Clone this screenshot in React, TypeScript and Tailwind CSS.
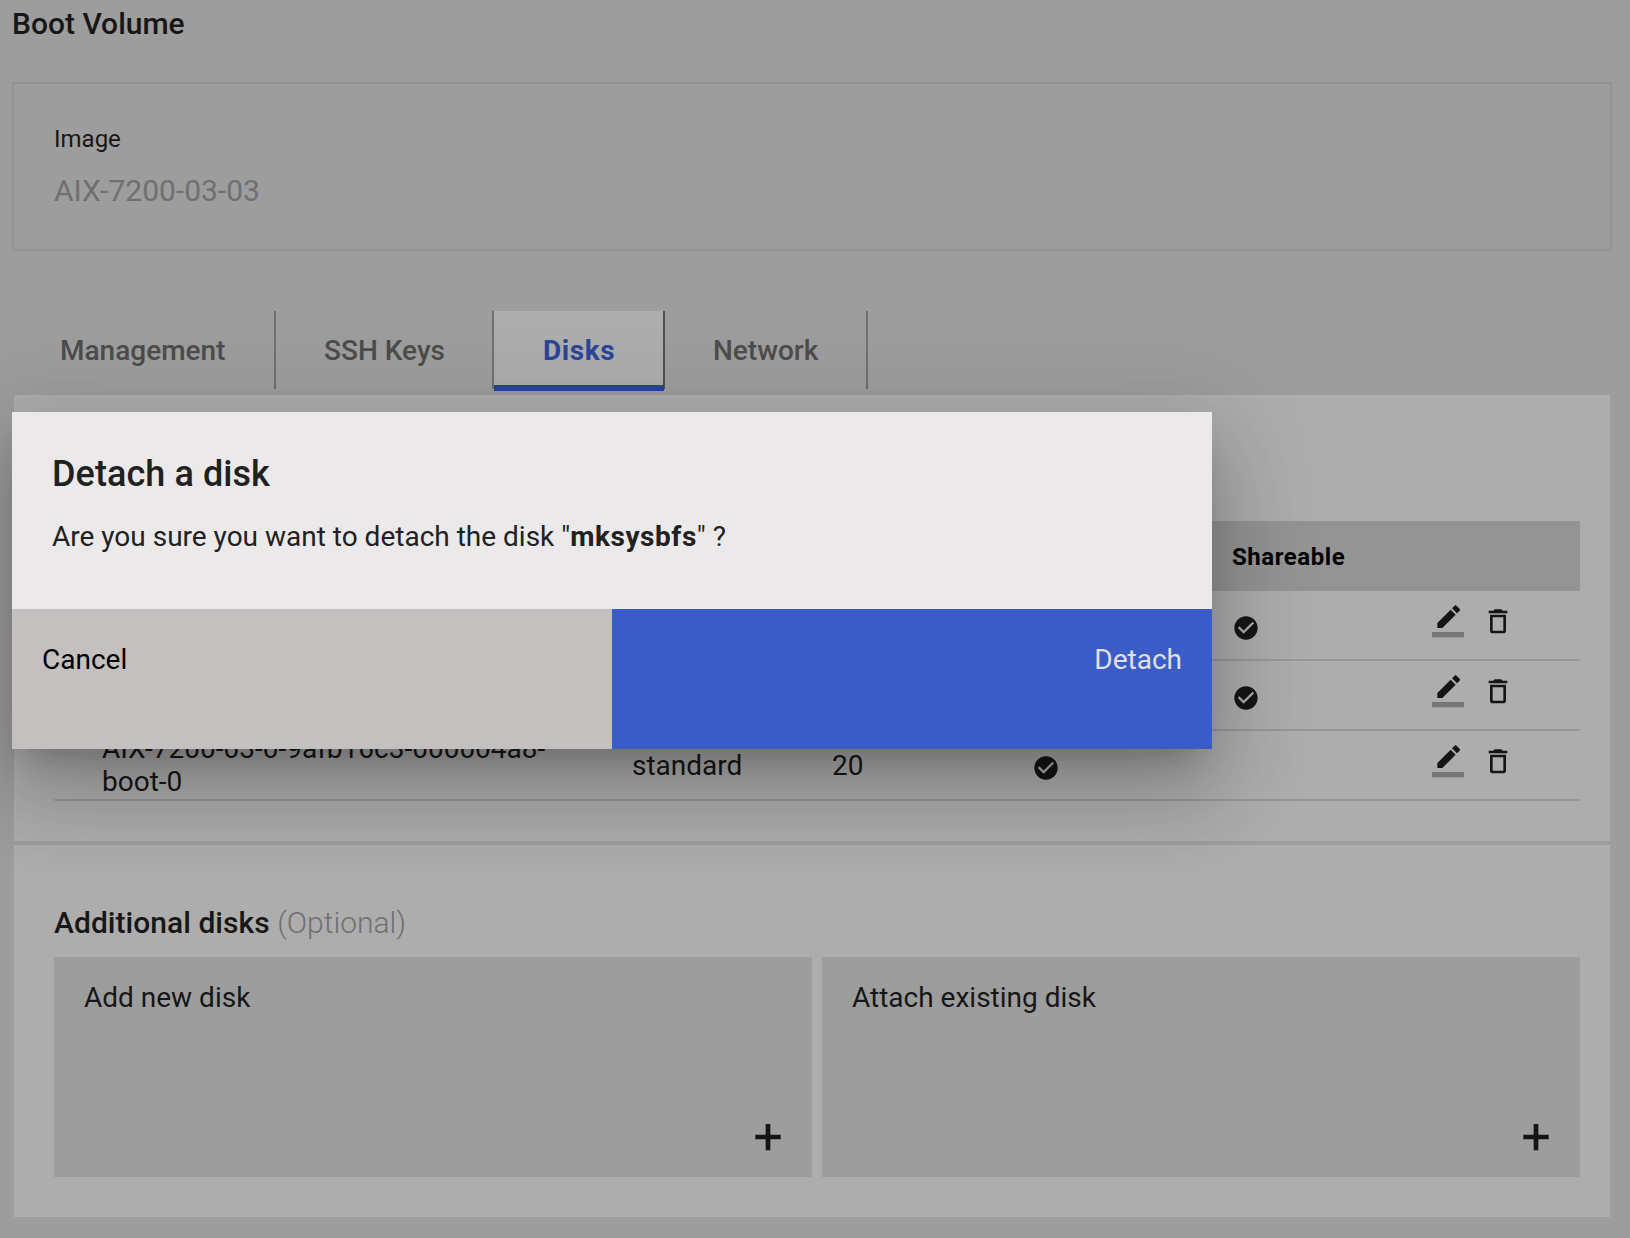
import React from "react";

type Disk = { name: string; type: string; size: string; bootable: boolean; shareable: boolean };

const disks: Disk[] = [
  { name: "", type: "", size: "", bootable: false, shareable: true },
  { name: "", type: "", size: "", bootable: false, shareable: true },
  { name: "AIX-7200-03-0-9afb16c3-000004a8-boot-0", type: "standard", size: "20", bootable: true, shareable: false },
];

function CheckIcon() {
  return (
    <svg viewBox="0 0 24 24" className="mt-1.5 h-7 w-7 fill-[#151515]">
      <path d="M12 2C6.48 2 2 6.48 2 12s4.48 10 10 10 10-4.48 10-10S17.52 2 12 2zm-2 15l-5-5 1.41-1.41L10 14.17l7.59-7.59L19 8l-9 9z" />
    </svg>
  );
}

function EditIcon() {
  return (
    <svg viewBox="0 -0.25 24 24" className="h-8 w-8 overflow-visible fill-[#151515]">
      <path d="M17.75 7L14 3.25l-10 10V17h3.75l10-10zm2.96-2.96c.39-.39.39-1.02 0-1.41L18.37.29c-.39-.39-1.02-.39-1.41 0L15 2.25 18.75 6l1.96-1.96z" />
      <path fillOpacity=".36" d="M0 20h24v4H0z" />
    </svg>
  );
}

function DeleteIcon() {
  return (
    <svg viewBox="0 -0.25 24 24" className="h-8 w-8 overflow-visible fill-[#151515]">
      <path d="M6 19c0 1.1.9 2 2 2h8c1.1 0 2-.9 2-2V7H6v12zM8 9h8v10H8V9zm7.5-5l-1-1h-5l-1 1H5v2h14V4h-3.5z" />
    </svg>
  );
}

function Tab({ label, width, active = false }: { label: string; width: number; active?: boolean }) {
  if (active) {
    return (
      <div
        className="relative flex h-[78px] items-center border-r-2 border-[#505050] bg-[#adadad] pl-[49px] pt-0.5 font-bold tracking-[0.6px] text-[#2a4599]"
        style={{ width }}
      >
        {label}
        <span className="absolute -right-px left-0 top-[74px] h-1.5 bg-[#2a4599]" />
      </div>
    );
  }
  return (
    <div
      className="flex h-[78px] items-center border-r-2 border-[#707070] pl-12 pt-0.5 font-medium text-[#4c4c4c]"
      style={{ width }}
    >
      <span className="whitespace-nowrap">{label}</span>
    </div>
  );
}

function AddCard({ label }: { label: string }) {
  return (
    <div className="flex h-[220px] flex-1 flex-col justify-between bg-[#9d9d9d] pl-[30px] pr-[31px] pt-[25px] pb-[26px]">
      <span className="leading-8">{label}</span>
      <svg viewBox="0 0 26 28" className="h-7 w-[26px] self-end">
        <path d="M0.3 14H25.7M13 1V27.3" stroke="#151515" strokeWidth="4.7" />
      </svg>
    </div>
  );
}

export default function App() {
  return (
    <div className="relative h-[1238px] w-[1630px] overflow-hidden bg-[#9d9d9d] pl-3 pt-1.5 font-['Roboto',sans-serif] text-[28px] text-[#171717]">
      <h1 className="text-[30px] font-medium leading-9">Boot Volume</h1>

      <section className="mt-10 flex h-[169px] w-[1600px] flex-col gap-5 border-2 border-[#949494] pl-10 pt-[41px]">
        <span className="text-2xl leading-7">Image</span>
        <span className="text-[30px] leading-9 text-[#707070]">AIX-7200-03-03</span>
      </section>

      <nav className="mt-[60px] flex h-[84px]">
        <Tab label="Management" width={264} />
        <Tab label="SSH Keys" width={218} />
        <Tab label="Disks" width={171} active />
        <Tab label="Network" width={203} />
      </nav>

      <main className="ml-0.5 flex w-[1596px] flex-col gap-1">
        <section className="h-[446px] bg-[#adadad] pl-10 pr-[30px] pt-[126px]">
          <div className="flex h-[70px] items-center bg-[#949494] pl-[1178px] pt-px text-2xl font-bold tracking-[0.55px] text-black">
            Shareable
          </div>
          {disks.map((disk, i) => (
            <div
              key={i}
              className="grid h-[70px] grid-cols-[530px_200px_200px_200px_200px_1fr] items-center border-b-2 border-[#979797] pl-12 leading-[33px]"
            >
              <span className="w-[460px]">{disk.name}</span>
              <span>{disk.type}</span>
              <span>{disk.size}</span>
              <span>{disk.bootable && <CheckIcon />}</span>
              <span>{disk.shareable && <CheckIcon />}</span>
              <span className="flex gap-[18px] pb-2">
                <EditIcon />
                <DeleteIcon />
              </span>
            </div>
          ))}
        </section>

        <section className="h-[372px] bg-[#adadad] pl-10 pr-[30px] pt-[60px]">
          <h2 className="text-[30px] font-medium leading-9">
            <span className="tracking-[0.04px]">Additional disks </span>
            <span className="font-light text-[#707070]">(Optional)</span>
          </h2>
          <div className="mt-4 flex gap-2.5">
            <AddCard label="Add new disk" />
            <AddCard label="Attach existing disk" />
          </div>
        </section>
      </main>

      <div
        role="dialog"
        className="absolute left-3 top-[412px] flex h-[337px] w-[1200px] flex-col bg-[#ebe9e9] text-[#212121] shadow-[0_22px_30px_-14px_rgba(0,0,0,0.2),0_48px_76px_6px_rgba(0,0,0,0.14),0_18px_92px_16px_rgba(0,0,0,0.12)]"
      >
        <div className="h-[197px] px-10 pt-10">
          <h3 className="text-4xl font-medium leading-[44px] tracking-[0.07px]">Detach a disk</h3>
          <p className="mt-[25px] leading-8">
            Are you sure you want to detach the disk "<b className="tracking-[0.55px]">mksysbfs</b>" ?
          </p>
        </div>
        <div className="flex flex-1 leading-8">
          <button className="flex w-1/2 items-start bg-[#c4c0bf] pl-[30px] pt-[35px] text-black">Cancel</button>
          <button className="flex w-1/2 items-start justify-end bg-[#3a5cc7] pr-[30px] pt-[35px] text-[#e0e0e0]">
            Detach
          </button>
        </div>
      </div>
    </div>
  );
}
